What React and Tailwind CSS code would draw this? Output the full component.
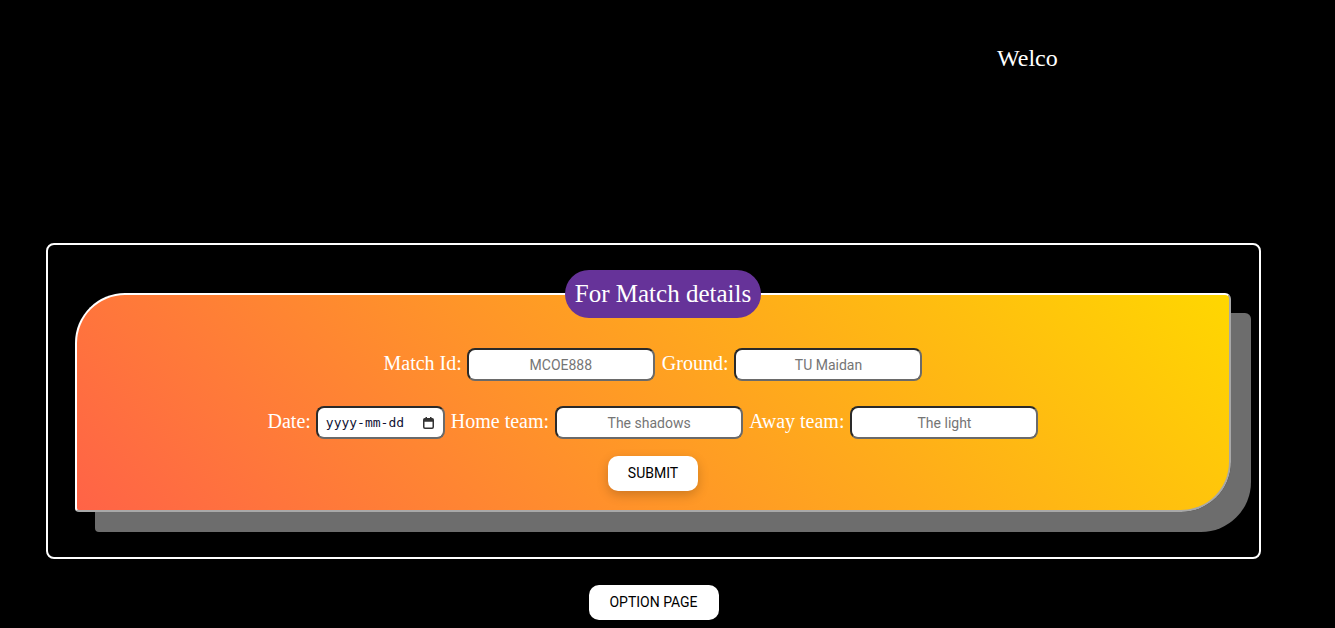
import React from "react";

function Field({ placeholder }) {
  return (
    <input
      type="text"
      placeholder={placeholder}
      className="w-[188px] h-[33px] rounded-lg border-2 border-t-[#2a2a2a] border-l-[#2a2a2a] border-r-[#6a6a6a] border-b-[#6a6a6a] bg-white text-center text-[14px] text-black placeholder:text-[#757575] font-['Roboto',sans-serif] outline-none"
    />
  );
}

function Label({ children }) {
  return (
    <span className="text-white text-[20px] font-['Liberation_Serif',serif] leading-none -translate-y-[2px]">
      {children}
    </span>
  );
}

function DateBox() {
  return (
    <div className="ml-[5px] mr-[6px] w-[129px] h-[33px] rounded-lg border-2 border-t-[#2a2a2a] border-l-[#2a2a2a] border-r-[#6a6a6a] border-b-[#6a6a6a] bg-white flex items-center justify-between pl-[8px] pr-[9px]">
      <span className="text-[13px] text-[#111133] font-['DejaVu_Sans_Mono',monospace] leading-none">yyyy-mm-dd</span>
      <svg width="11" height="12" viewBox="0 0 11 12" aria-hidden="true">
        <rect x="0.75" y="1.75" width="9.5" height="9.5" rx="1.2" fill="none" stroke="#333" strokeWidth="1.5" />
        <rect x="0.75" y="1.75" width="9.5" height="3" fill="#333" />
        <rect x="2.5" y="0" width="1.5" height="2.5" fill="#333" />
        <rect x="7" y="0" width="1.5" height="2.5" fill="#333" />
      </svg>
    </div>
  );
}

export default function App() {
  return (
    <div className="min-h-screen w-full bg-black overflow-hidden">
      <div className="h-[243px] pt-[44px]">
        <div className="ml-[997px] whitespace-nowrap text-white text-[24px] leading-[28px] font-['Liberation_Serif',serif]">
          Welco
        </div>
      </div>

      <div className="ml-[46px] w-[1215px] h-[316px] border-2 border-white rounded-lg pt-[48px] pl-[27px]">
        <div className="relative w-[1156px] h-[219px] rounded-tl-[50px] rounded-tr-[6px] rounded-br-[50px] rounded-bl-[4px] border-2 border-t-white border-l-white border-r-[#a8a8a8] border-b-[#a8a8a8] bg-[linear-gradient(45deg,#ff6347,#ffd700)] shadow-[20px_20px_0_#6d6d6d]">
          <div className="absolute left-[488px] top-[-25px] h-[48px] w-[196px] rounded-full bg-[#663399] flex items-center justify-center text-white text-[25px] font-['Liberation_Serif',serif]">
            For Match details
          </div>

          <div className="flex flex-col items-center pt-[53px]">
            <div className="flex items-center h-[33px]">
              <Label>Match Id:</Label>
              <div className="ml-[5px] mr-[7px]"><Field placeholder="MCOE888" /></div>
              <Label>Ground:</Label>
              <div className="ml-[6px]"><Field placeholder="TU Maidan" /></div>
            </div>

            <div className="flex items-center h-[33px] mt-[25px]">
              <Label>Date:</Label>
              <DateBox />
              <Label>Home team:</Label>
              <div className="ml-[6px] mr-[6px]"><Field placeholder="The shadows" /></div>
              <Label>Away team:</Label>
              <div className="ml-[6px]"><Field placeholder="The light" /></div>
            </div>

            <button className="mt-[17px] w-[90px] h-[35px] rounded-[10px] bg-white text-black text-[14px] font-['Roboto',sans-serif] shadow-[0_4px_12px_rgba(0,0,0,0.2)]">
              SUBMIT
            </button>
          </div>
        </div>
      </div>

      <div className="ml-[46px] w-[1215px] flex justify-center mt-[26px]">
        <button className="w-[130px] h-[35px] rounded-[10px] bg-white text-black text-[14px] font-['Roboto',sans-serif]">
          OPTION PAGE
        </button>
      </div>
    </div>
  );
}
